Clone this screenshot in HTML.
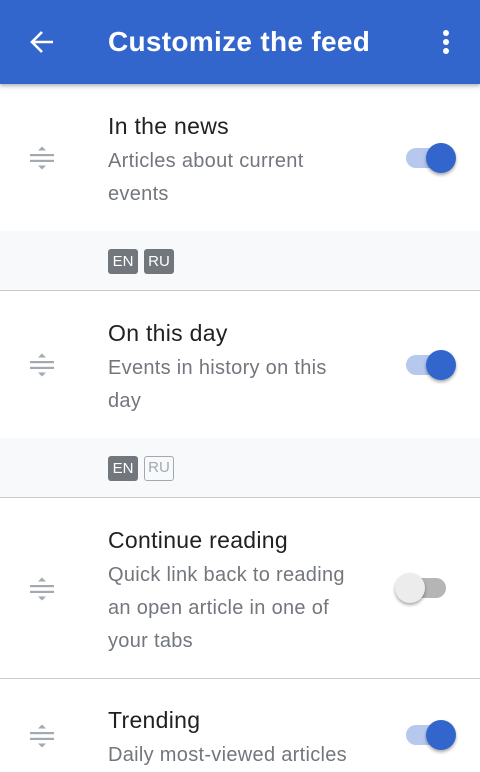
<!DOCTYPE html>
<html><head><meta charset="utf-8"><style>
*{margin:0;padding:0;box-sizing:border-box}
body{width:480px;height:764px;overflow:hidden;background:#fff;font-family:"Liberation Sans",sans-serif;position:relative}
.hdr{position:absolute;left:0;top:0;width:480px;height:84px;background:#3366cc;box-shadow:0 2px 4px rgba(0,0,0,.3);z-index:2}
.hdr .t{position:absolute;left:108px;top:26px;font-size:28px;font-weight:bold;color:#fff;letter-spacing:0.3px}
.a{position:absolute}
.title{position:absolute;left:108px;font-size:23px;color:#202122;letter-spacing:0.3px}
.desc{position:absolute;left:108px;font-size:20px;color:#72777d;line-height:33px;width:248px;letter-spacing:0.3px}
.strip{position:absolute;left:0;width:480px;height:60px;background:#f8f9fa;border-bottom:1px solid #c8ccd1}
.b{position:absolute;top:18px;height:25px;width:30px;border-radius:3px;font-size:15px;line-height:25px;text-align:center;color:#fff;background:#72777d}
.b.o{background:transparent;border:1.5px solid #a2a9b1;color:#a2a9b1;line-height:22px}
.div{position:absolute;left:0;width:480px;height:1px;background:#c8ccd1}
.tr{position:absolute;width:40px;height:20px;border-radius:10px;background:#b6c8ee}
.th{position:absolute;width:30px;height:30px;border-radius:50%;background:#3366cc;box-shadow:0 2px 3px rgba(0,0,0,.35)}
</style></head><body>
<div class="hdr">
<svg class="a" style="left:28px;top:28px" width="28" height="28" viewBox="0 0 28 28"><path d="M25 14H5M14 4L4 14l10 10" stroke="#fff" stroke-width="2.6" fill="none"/></svg>
<div class="t">Customize the feed</div>
<svg class="a" style="left:440px;top:29px" width="12" height="28" viewBox="0 0 12 28"><circle cx="6" cy="4" r="3" fill="#fff"/><circle cx="6" cy="13" r="3" fill="#fff"/><circle cx="6" cy="22" r="3" fill="#fff"/></svg>
</div>

<svg class="a" style="left:30px;top:146px" width="24" height="24" viewBox="0 0 24 24"><path d="M8 4.5h8L12 0.5z M8 19.5h8L12 23.5z" fill="#a2a9b1"/><rect x="0" y="8" width="24" height="2.2" fill="#a2a9b1"/><rect x="0" y="13.8" width="24" height="2.2" fill="#a2a9b1"/></svg>
<div class="title" style="top:113px">In the news</div>
<div class="desc" style="top:145px">Articles about current events</div>
<div class="tr" style="left:406px;top:148px"></div><div class="th" style="left:426px;top:143px"></div>
<div class="strip" style="top:231px"><div class="b" style="left:108px">EN</div><div class="b" style="left:144px">RU</div></div>

<svg class="a" style="left:30px;top:353px" width="24" height="24" viewBox="0 0 24 24"><path d="M8 4.5h8L12 0.5z M8 19.5h8L12 23.5z" fill="#a2a9b1"/><rect x="0" y="8" width="24" height="2.2" fill="#a2a9b1"/><rect x="0" y="13.8" width="24" height="2.2" fill="#a2a9b1"/></svg>
<div class="title" style="top:320px">On this day</div>
<div class="desc" style="top:352px">Events in history on this day</div>
<div class="tr" style="left:406px;top:355px"></div><div class="th" style="left:426px;top:350px"></div>
<div class="strip" style="top:438px"><div class="b" style="left:108px">EN</div><div class="b o" style="left:144px">RU</div></div>

<svg class="a" style="left:30px;top:577px" width="24" height="24" viewBox="0 0 24 24"><path d="M8 4.5h8L12 0.5z M8 19.5h8L12 23.5z" fill="#a2a9b1"/><rect x="0" y="8" width="24" height="2.2" fill="#a2a9b1"/><rect x="0" y="13.8" width="24" height="2.2" fill="#a2a9b1"/></svg>
<div class="title" style="top:527px">Continue reading</div>
<div class="desc" style="top:559px">Quick link back to reading an open article in one of your tabs</div>
<div class="tr" style="left:406px;top:578px;background:#b5b5b5"></div><div class="th" style="left:395px;top:573px;background:#ececec"></div>
<div class="div" style="top:678px"></div>

<svg class="a" style="left:30px;top:724px" width="24" height="24" viewBox="0 0 24 24"><path d="M8 4.5h8L12 0.5z M8 19.5h8L12 23.5z" fill="#a2a9b1"/><rect x="0" y="8" width="24" height="2.2" fill="#a2a9b1"/><rect x="0" y="13.8" width="24" height="2.2" fill="#a2a9b1"/></svg>
<div class="title" style="top:707px">Trending</div>
<div class="desc" style="top:739px;width:300px">Daily most-viewed articles</div>
<div class="tr" style="left:406px;top:725px"></div><div class="th" style="left:426px;top:720px"></div>
</body></html>
